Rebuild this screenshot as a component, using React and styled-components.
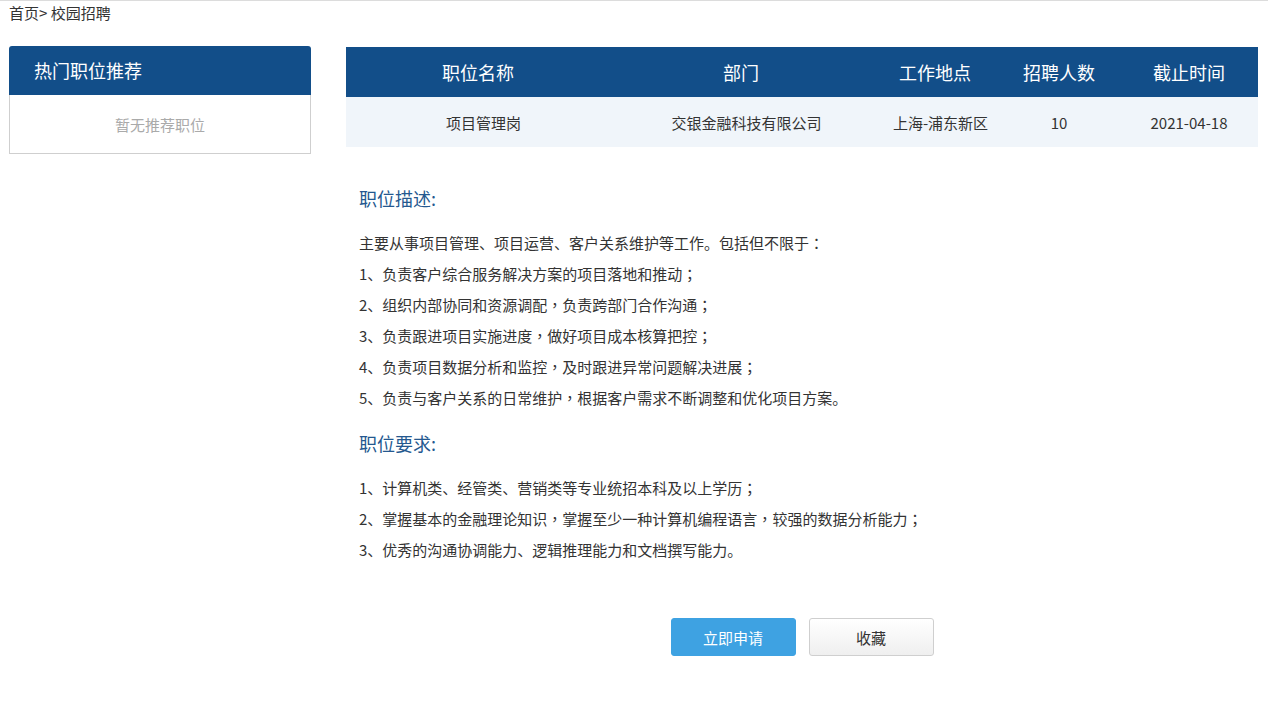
import React from "react";
import styled, { createGlobalStyle } from "styled-components";

const GlobalStyle = createGlobalStyle`
  html, body { margin: 0; padding: 0; background: #fff; }
  body {
    font-family: "Noto Sans CJK SC", "Microsoft YaHei", sans-serif;
    color: #333;
    font-size: 15px;
  }
  * { box-sizing: border-box; }
`;

const Breadcrumb = styled.div`
  border-top: 1px solid #dcdcdc;
  height: 26px;
  line-height: 23px;
  padding-left: 9px;
  font-size: 15px;
  color: #333;
`;

const Main = styled.div`
  display: flex;
  align-items: flex-start;
  gap: 35px;
  padding: 20px 0 0 9px;
`;

const Sidebar = styled.aside`
  width: 302px;
  flex: none;
`;

const SideHeader = styled.div`
  height: 49px;
  line-height: 49px;
  padding-left: 25px;
  background: #124e89;
  color: #fff;
  font-size: 18px;
  border-radius: 3px 3px 0 0;
`;

const SideBody = styled.div`
  height: 59px;
  border: 1px solid #cfcfcf;
  border-top: none;
  display: flex;
  align-items: center;
  justify-content: center;
  color: #aaa;
  font-size: 15px;
`;

const Content = styled.section`
  width: 912px;
  flex: none;
  margin-top: 1px;
`;

const Table = styled.table`
  width: 100%;
  border-collapse: collapse;
  table-layout: fixed;
`;

const Th = styled.th`
  height: 50px;
  padding: 0;
  background: #124e89;
  color: #fff;
  font-size: 18px;
  font-weight: normal;
  text-align: center;
`;

const Td = styled.td`
  height: 50px;
  padding: 0 0 0 ${(p) => (p.$shift ? "11px" : "0")};
  background: #f0f5fa;
  color: #333;
  font-size: 15px;
  text-align: center;
`;

const Detail = styled.div`
  padding: 39px 0 0 13px;
`;

const SectionTitle = styled.h3`
  margin: ${(p) => (p.$first ? "0" : "18px")} 0 17px;
  font-size: 18px;
  line-height: 24px;
  font-weight: normal;
  color: #24588f;
`;

const Line = styled.p`
  margin: 0;
  font-size: 15px;
  line-height: 31px;
  color: #333;
`;

const Punct = styled.span`
  font-family: "Noto Sans CJK TC", "Noto Sans CJK SC", sans-serif;
`;

const Actions = styled.div`
  display: flex;
  justify-content: center;
  gap: 13px;
  margin-top: 53px;
`;

const Button = styled.button`
  width: 125px;
  height: 38px;
  border-radius: 3px;
  font-family: inherit;
  font-size: 15px;
  cursor: pointer;
  border: 1px solid ${(p) => (p.$primary ? "#3ea2e2" : "#cfcfcf")};
  background: ${(p) =>
    p.$primary ? "#3ea2e2" : "linear-gradient(#ffffff, #efefef)"};
  color: ${(p) => (p.$primary ? "#fff" : "#333")};
`;

const cols = [264, 262, 126, 122, 138];
const heads = ["职位名称", "部门", "工作地点", "招聘人数", "截止时间"];
const row = ["项目管理岗", "交银金融科技有限公司", "上海-浦东新区", "10", "2021-04-18"];

const desc = [
  "主要从事项目管理、项目运营、客户关系维护等工作。包括但不限于：",
  "1、负责客户综合服务解决方案的项目落地和推动；",
  "2、组织内部协同和资源调配，负责跨部门合作沟通；",
  "3、负责跟进项目实施进度，做好项目成本核算把控；",
  "4、负责项目数据分析和监控，及时跟进异常问题解决进展；",
  "5、负责与客户关系的日常维护，根据客户需求不断调整和优化项目方案。",
];

const reqs = [
  "1、计算机类、经管类、营销类等专业统招本科及以上学历；",
  "2、掌握基本的金融理论知识，掌握至少一种计算机编程语言，较强的数据分析能力；",
  "3、优秀的沟通协调能力、逻辑推理能力和文档撰写能力。",
];

function Text({ children }) {
  return children
    .split(/([，；：])/)
    .map((part, i) =>
      /^[，；：]$/.test(part) ? <Punct key={i}>{part}</Punct> : part
    );
}

export default function App() {
  return (
    <>
      <GlobalStyle />
      <Breadcrumb>首页&gt; 校园招聘</Breadcrumb>
      <Main>
        <Sidebar>
          <SideHeader>热门职位推荐</SideHeader>
          <SideBody>暂无推荐职位</SideBody>
        </Sidebar>
        <Content>
          <Table>
            <colgroup>
              {cols.map((w, i) => (
                <col key={i} style={{ width: w }} />
              ))}
            </colgroup>
            <thead>
              <tr>
                {heads.map((h) => (
                  <Th key={h}>{h}</Th>
                ))}
              </tr>
            </thead>
            <tbody>
              <tr>
                {row.map((c, i) => (
                  <Td key={c} $shift={i < 3}>
                    {c}
                  </Td>
                ))}
              </tr>
            </tbody>
          </Table>
          <Detail>
            <SectionTitle $first>职位描述:</SectionTitle>
            {desc.map((t) => (
              <Line key={t}>
                <Text>{t}</Text>
              </Line>
            ))}
            <SectionTitle>职位要求:</SectionTitle>
            {reqs.map((t) => (
              <Line key={t}>
                <Text>{t}</Text>
              </Line>
            ))}
          </Detail>
          <Actions>
            <Button $primary>立即申请</Button>
            <Button>收藏</Button>
          </Actions>
        </Content>
      </Main>
    </>
  );
}
